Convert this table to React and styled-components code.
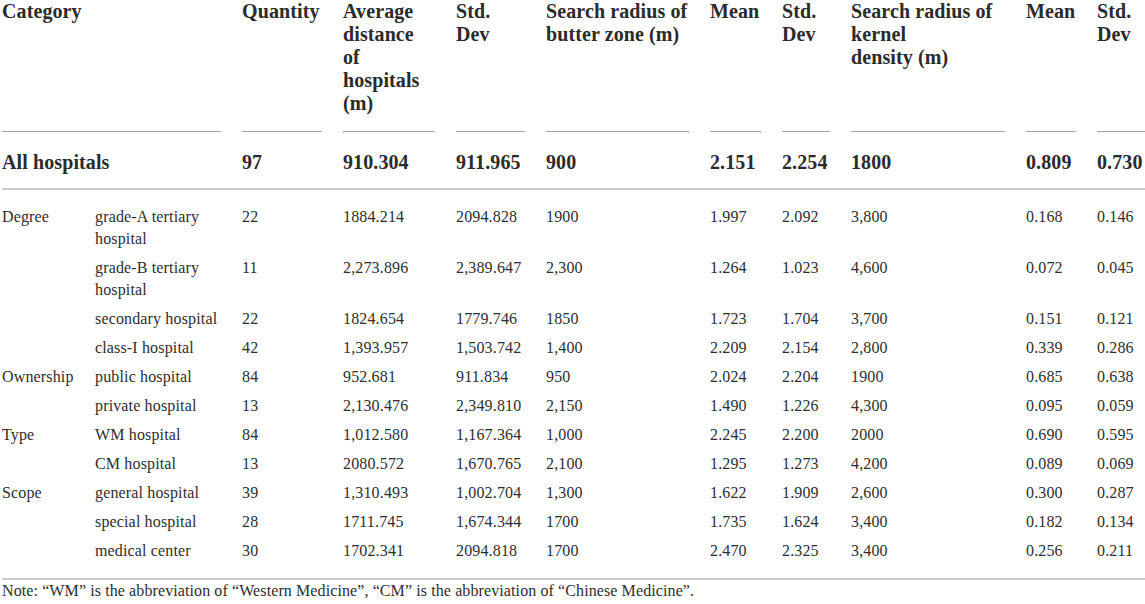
import React from "react";
import styled, { createGlobalStyle } from "styled-components";

const Global = createGlobalStyle`
  body {
    margin: 0;
    background: #fff;
    font-family: "Liberation Serif", "Times New Roman", serif;
    color: #2e2e2e;
  }
`;

const colWidths = [93, 147, 101, 113, 90, 164, 72, 69, 175, 71, 48];

// header lines as they break in the printed table
const headers = [
  ["Quantity"],
  ["Average", "distance", "of", "hospitals", "(m)"],
  ["Std.", "Dev"],
  ["Search radius of", "butter zone\u00a0(m)"],
  ["Mean"],
  ["Std.", "Dev"],
  ["Search radius of", "kernel", "density\u00a0(m)"],
  ["Mean"],
  ["Std.", "Dev"],
];

const total = ["97", "910.304", "911.965", "900", "2.151", "2.254", "1800", "0.809", "0.730"];

const rows = [
  ["Degree", "grade-A tertiary hospital", "22", "1884.214", "2094.828", "1900", "1.997", "2.092", "3,800", "0.168", "0.146"],
  ["", "grade-B tertiary hospital", "11", "2,273.896", "2,389.647", "2,300", "1.264", "1.023", "4,600", "0.072", "0.045"],
  ["", "secondary hospital", "22", "1824.654", "1779.746", "1850", "1.723", "1.704", "3,700", "0.151", "0.121"],
  ["", "class-I hospital", "42", "1,393.957", "1,503.742", "1,400", "2.209", "2.154", "2,800", "0.339", "0.286"],
  ["Ownership", "public hospital", "84", "952.681", "911.834", "950", "2.024", "2.204", "1900", "0.685", "0.638"],
  ["", "private hospital", "13", "2,130.476", "2,349.810", "2,150", "1.490", "1.226", "4,300", "0.095", "0.059"],
  ["Type", "WM hospital", "84", "1,012.580", "1,167.364", "1,000", "2.245", "2.200", "2000", "0.690", "0.595"],
  ["", "CM hospital", "13", "2080.572", "1,670.765", "2,100", "1.295", "1.273", "4,200", "0.089", "0.069"],
  ["Scope", "general hospital", "39", "1,310.493", "1,002.704", "1,300", "1.622", "1.909", "2,600", "0.300", "0.287"],
  ["", "special hospital", "28", "1711.745", "1,674.344", "1700", "1.735", "1.624", "3,400", "0.182", "0.134"],
  ["", "medical center", "30", "1702.341", "2094.818", "1700", "2.470", "2.325", "3,400", "0.256", "0.211"],
];

const Page = styled.div`
  padding-left: 2px;
  width: 1143px;
`;

const Table = styled.table`
  width: 1143px;
  table-layout: fixed;
  border-collapse: collapse;
  border-spacing: 0;
`;

const Head = styled.th`
  text-align: left;
  vertical-align: top;
  font-weight: bold;
  font-size: 20px;
  line-height: 23px;
  letter-spacing: 0.1px;
  white-space: nowrap;
  color: #2b2b2b;
  padding: 0 21px 17px 0;
  background: linear-gradient(#a6a6a6, #a6a6a6) no-repeat left bottom / calc(100% - 21px) 1px;
  &:last-child {
    padding-right: 0;
    background-size: 100% 1px;
  }
`;

const TotalCell = styled.td`
  font-weight: bold;
  font-size: 20px;
  line-height: 23px;
  letter-spacing: 0.1px;
  color: #2b2b2b;
  padding: 19px 21px 14px 0;
  border-bottom: 2px solid #cbcbcb;
  white-space: nowrap;
  &:last-child {
    padding-right: 0;
  }
`;

const Cell = styled.td`
  vertical-align: top;
  font-size: 16px;
  line-height: 22px;
  letter-spacing: 0.15px;
  padding: ${(p) => (p.$first ? "15.5px" : "3.5px")} 21px ${(p) => (p.$last ? "16px" : "3.5px")} 0;
  border-bottom: ${(p) => (p.$last ? "2px solid #cbcbcb" : "none")};
  &:last-child {
    padding-right: 0;
  }
`;

const Note = styled.p`
  margin: 0;
  font-size: 16px;
  line-height: 22px;
  letter-spacing: 0.1px;
  color: #2e2e2e;
`;

export default function App() {
  return (
    <Page>
      <Global />
      <Table>
        <colgroup>
          {colWidths.map((w, i) => (
            <col key={i} style={{ width: w }} />
          ))}
        </colgroup>
        <thead>
          <tr>
            <Head colSpan={2}>Category</Head>
            {headers.map((lines, i) => (
              <Head key={i}>
                {lines.map((l, j) => (
                  <React.Fragment key={j}>
                    {j > 0 && <br />}
                    {l}
                  </React.Fragment>
                ))}
              </Head>
            ))}
          </tr>
        </thead>
        <tbody>
          <tr>
            <TotalCell colSpan={2}>All hospitals</TotalCell>
            {total.map((v, i) => (
              <TotalCell key={i}>{v}</TotalCell>
            ))}
          </tr>
          {rows.map((r, ri) => (
            <tr key={ri}>
              {r.map((v, ci) => (
                <Cell key={ci} $first={ri === 0} $last={ri === rows.length - 1}>
                  {v}
                </Cell>
              ))}
            </tr>
          ))}
        </tbody>
      </Table>
      <Note>
        Note: “WM” is the abbreviation of “Western Medicine”, “CM” is the abbreviation of “Chinese Medicine”.
      </Note>
    </Page>
  );
}
